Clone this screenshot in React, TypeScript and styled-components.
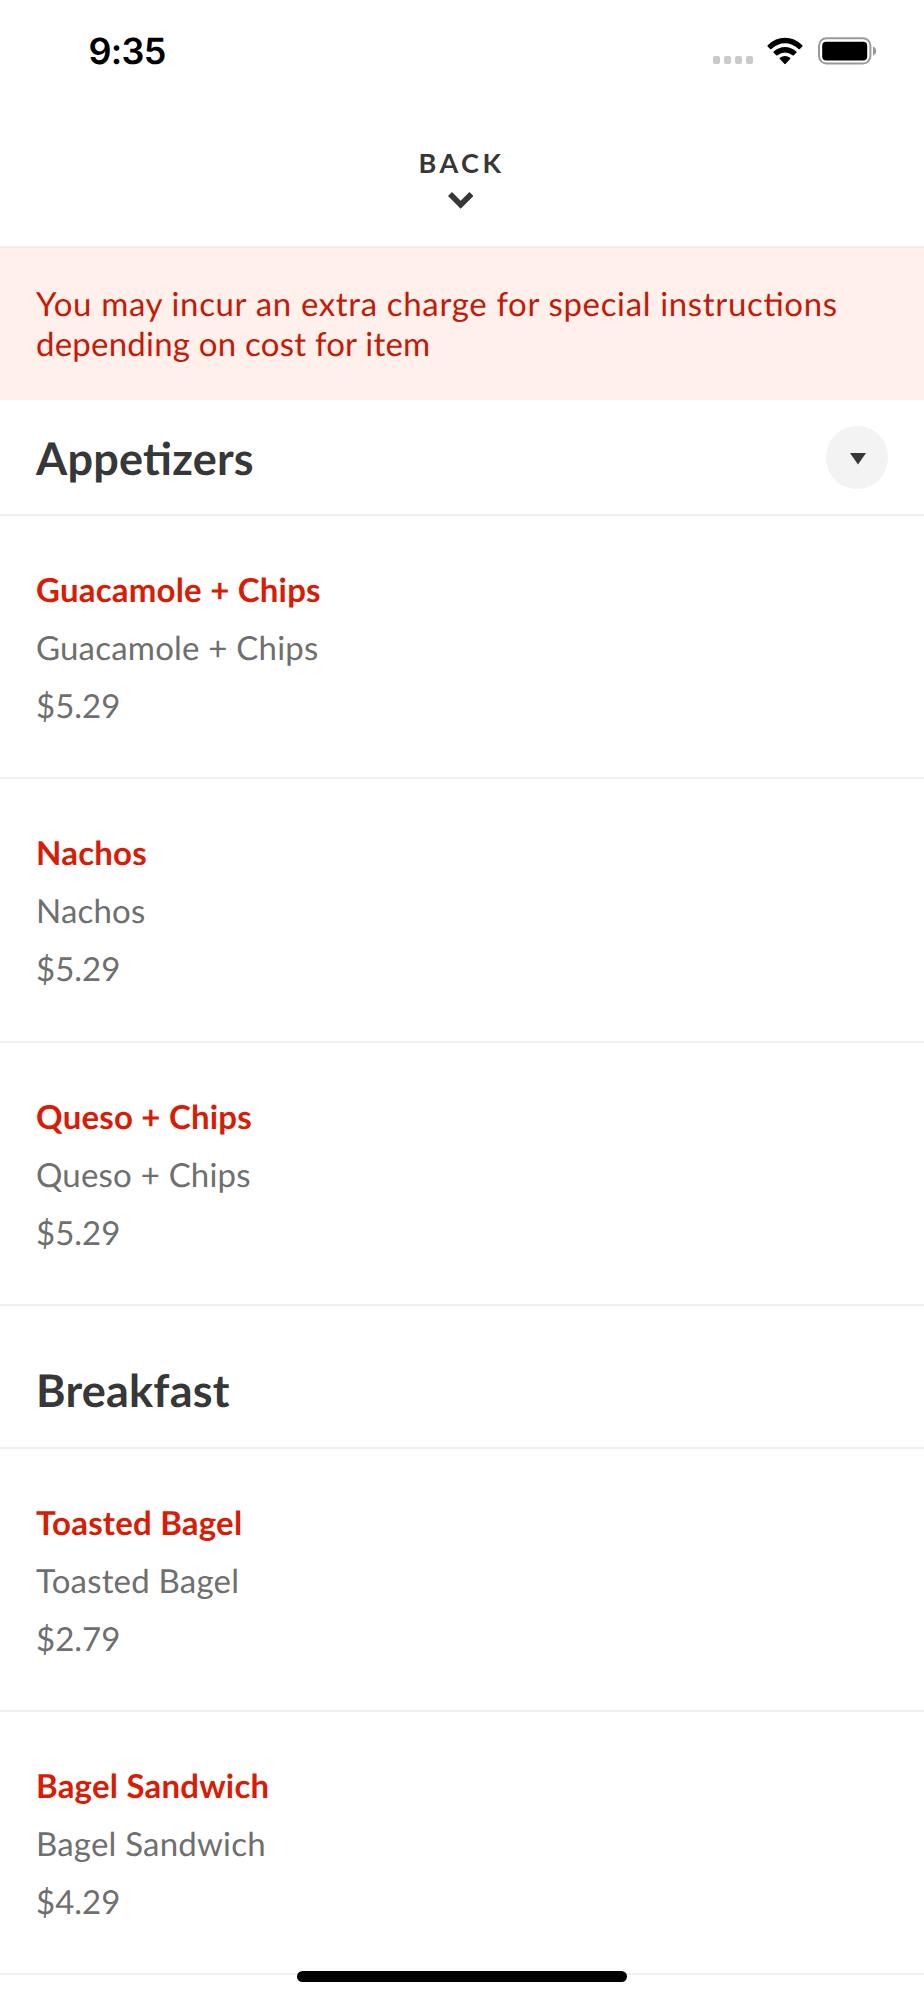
import React from 'react';
import styled, { createGlobalStyle } from 'styled-components';

const Global = createGlobalStyle`
  *{box-sizing:border-box}
  body{margin:0;background:#fff;font-family:Lato,sans-serif;color:#373737;text-rendering:geometricPrecision;font-feature-settings:"liga" 1;-webkit-font-smoothing:antialiased}
  h2,p,h3{margin:0}
`;
const Screen = styled.main`position:relative;width:924px;height:2000px;overflow:hidden;background:#fff;`;
const Status = styled.header`height:101px;padding:0 46px 0 88.5px;display:flex;justify-content:space-between;align-items:center;`;
const Time = styled.time`font:600 36px/44px Inter,sans-serif;color:#000;letter-spacing:-.7px;`;
const Indicators = styled.div`display:flex;align-items:flex-end;height:28px;`;
const Signal = styled.div`display:flex;gap:3.4px;margin:0 13.8px 1px 0;`;
const Dot = styled.i`width:7.6px;height:7.6px;border-radius:2px;background:#cacaca;`;
const Wifi = styled.svg`display:block;width:36px;height:28px;margin-right:15px;`;
const Battery = styled.svg`display:block;width:60px;height:28px;`;
const Back = styled.button`width:100%;height:147px;border:0;border-bottom:2px solid #efefef;background:#fff;padding:45px 0 0;display:flex;flex-direction:column;align-items:center;font:700 27px/34px Lato,sans-serif;letter-spacing:3.5px;color:#373737;`;
const BackLabel = styled.span`margin-right:1px;`;
const Chevron = styled.svg`display:block;width:25.4px;height:17px;margin:12px 2.6px 0 0;`;
const Notice = styled.p`height:152px;padding:36px 36px;background:#fff0ec;color:#c41a08;font-size:33px;line-height:40px;white-space:nowrap;`;
const NoticeLine = styled.span<{$tracking:number}>`display:block;letter-spacing:${p=>p.$tracking}px;`;
const Section = styled.div<{$spaced?:boolean}>`height:${p=>p.$spaced?143:116}px;padding:${p=>p.$spaced?28:1}px 36px 0;border-bottom:2px solid #efefef;display:flex;align-items:center;justify-content:space-between;`;
const Title = styled.h2`font-size:45px;line-height:54px;font-weight:700;letter-spacing:.22px;`;
const Toggle = styled.button`width:62.4px;height:62.4px;border:0;border-radius:50%;background:#f3f3f3;display:grid;place-items:center;padding:3px 0 0 2px;`;
const Triangle = styled.svg`display:block;width:16px;height:12px;`;
const Item = styled.article`height:263.25px;border-bottom:2px solid #efefef;padding:45px 36px 0;font-size:33px;line-height:58px;letter-spacing:.2px;color:#6f6f6f;`;
const Name = styled.h3`font-size:33px;font-weight:700;color:#d91c05;`;
const Price = styled.p`letter-spacing:0;`;
const Home = styled.div`position:absolute;left:297px;top:1971px;width:330px;height:11px;border-radius:6px;background:#000;`;

const Dish = ({name, price}:{name:string;price:string}) => <Item><Name>{name}</Name><p>{name}</p><Price>{price}</Price></Item>;

export default function App(){
  return <Screen><Global/>
    <Status>
      <Time>9:35</Time>
      <Indicators>
        <Signal><Dot/><Dot/><Dot/><Dot/></Signal>
        <Wifi viewBox="0 0 36 28">
          <path d="M.7 8.2Q8.5.8 18 .8t17.3 7.4q.7.7 0 1.4l-2.4 2.3q-.6.6-1.3 0Q25.3 6.3 18 6.3T4.4 11.9q-.7.6-1.3 0L.7 9.6Q0 8.9.7 8.2Z"/>
          <path d="M6.7 14.4Q11.8 9.9 18 9.9t11.3 4.5q.8.7 0 1.4l-2.5 2.4q-.6.6-1.3 0Q22 15.4 18 15.4t-7.5 2.8q-.7.6-1.3 0l-2.5-2.4q-.8-.7 0-1.4Z"/>
          <path d="M12.9 20.7Q15.2 19 18 19t5.1 1.7q.7.6 0 1.3l-4.4 4.8q-.7.7-1.4 0L12.9 22q-.7-.7 0-1.3Z"/>
        </Wifi>
        <Battery viewBox="0 0 60 28">
          <rect x="1" y="1.2" width="51.4" height="25.4" rx="7.5" fill="none" stroke="#999" strokeWidth="2"/>
          <rect x="4.2" y="4.7" width="45" height="18.7" rx="4"/>
          <path d="M55 9.5q3.2 1.1 3.2 4.5T55 18.5Z" fill="#999"/>
        </Battery>
      </Indicators>
    </Status>
    <Back><BackLabel>BACK</BackLabel>
      <Chevron viewBox="0 0 25.4 17"><path d="M0 4 4 0l8.7 8.7L21.4 0l4 4-12.7 12.8Z" fill="#373737"/></Chevron>
    </Back>
    <Notice>
      <NoticeLine $tracking={.65}>You may incur an extra charge for special instructions</NoticeLine>
      <NoticeLine $tracking={.22}>depending on cost for item</NoticeLine>
    </Notice>
    <Section><Title>Appetizers</Title><Toggle aria-label="Choose section"><Triangle viewBox="0 0 16 12"><path d="M0 0h16L8 11.6Z" fill="#373737"/></Triangle></Toggle></Section>
    <Dish name="Guacamole + Chips" price="$5.29"/>
    <Dish name="Nachos" price="$5.29"/>
    <Dish name="Queso + Chips" price="$5.29"/>
    <Section $spaced><Title>Breakfast</Title></Section>
    <Dish name="Toasted Bagel" price="$2.79"/>
    <Dish name="Bagel Sandwich" price="$4.29"/>
    <Home/>
  </Screen>;
}
